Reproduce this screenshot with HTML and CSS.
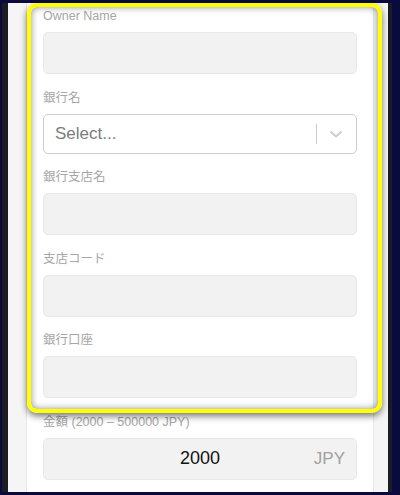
FILE: index.html
```html
<!DOCTYPE html>
<html lang="ja">
<head>
<meta charset="utf-8">
<title>Form</title>
<link rel="stylesheet" href="styles.css">
</head>
<body>
<div class="frame">
  <div class="screen">
    <div class="card">
      <div class="field">
        <div class="label">Owner Name</div>
        <div class="input"></div>
      </div>
      <div class="field">
        <div class="label">銀行名</div>
        <div class="select">
          <span class="placeholder">Select...</span>
          <span class="sep"></span>
          <svg class="chev" width="14" height="8" viewBox="0 0 14 8"><polyline points="1.5,1.5 7,6.5 12.5,1.5" fill="none" stroke="#cccccc" stroke-width="2"/></svg>
        </div>
      </div>
      <div class="field">
        <div class="label">銀行支店名</div>
        <div class="input"></div>
      </div>
      <div class="field">
        <div class="label">支店コード</div>
        <div class="input"></div>
      </div>
      <div class="field">
        <div class="label">銀行口座</div>
        <div class="input"></div>
      </div>
      <div class="field">
        <div class="label">金額 (2000 – 500000 JPY)</div>
        <div class="input amount">
          <span class="value">2000</span>
          <span class="unit">JPY</span>
        </div>
      </div>
    </div>
  </div>
  <div class="highlight"></div>
</div>
</body>
</html>
```
FILE: styles.css
```css
html, body {
  margin: 0;
  padding: 0;
}
body {
  background: #0a0a3c;
  width: 400px;
  height: 495px;
  overflow: hidden;
  font-family: "Liberation Sans", "Noto Sans CJK JP", sans-serif;
}
.frame {
  position: relative;
  margin: 3px 8px 3px 2px;
  height: 489px;
  border-left: 6px solid #1c1c26;
  border-right: 4px solid #1c1c26;
  box-sizing: border-box;
}
.screen {
  height: 100%;
  background: #f5f5f5;
  padding: 0 14px 0 18px;
  box-sizing: border-box;
  overflow: hidden;
}
.card {
  background: #ffffff;
  height: 100%;
  border-left: 1px solid #e6e6e6;
  border-right: 1px solid #e6e6e6;
  padding: 3px 16px 0 16px;
  box-sizing: border-box;
}
.field {
  margin-bottom: 13.6px;
}
.label {
  font-family: "Liberation Sans", "Noto Sans CJK JP", sans-serif;
  font-size: 12.5px;
  line-height: 20px;
  height: 20px;
  color: #a6a6a6;
  margin-bottom: 6px;
  white-space: nowrap;
}
.input {
  height: 42px;
  background: #f2f2f2;
  border: 1px solid #e8e8e8;
  border-radius: 5px;
  box-sizing: border-box;
}
.select {
  height: 40px;
  background: #ffffff;
  border: 1px solid #cccccc;
  border-radius: 5px;
  box-sizing: border-box;
  display: flex;
  align-items: center;
  padding-left: 11px;
  margin-bottom: 2px;
}
.placeholder {
  flex: 1;
  font-size: 17px;
  color: #7c7c7c;
}
.sep {
  width: 1px;
  height: 20px;
  background: #cccccc;
}
.chev {
  margin: 0 13px 0 12px;
}
.amount {
  display: flex;
  align-items: center;
  justify-content: center;
  position: relative;
}
.value {
  font-size: 18px;
  color: #111111;
}
.unit {
  position: absolute;
  right: 11px;
  font-size: 17px;
  color: #a0a0a0;
}
.highlight {
  position: absolute;
  left: 19px;
  top: 0;
  width: 355px;
  height: 410px;
  border: 4px solid #ffff00;
  border-radius: 10px;
  box-sizing: border-box;
  box-shadow: 0 3px 7px rgba(0, 0, 0, 0.55), inset 0 0 7px rgba(0, 0, 0, 0.45);
  pointer-events: none;
}
```
